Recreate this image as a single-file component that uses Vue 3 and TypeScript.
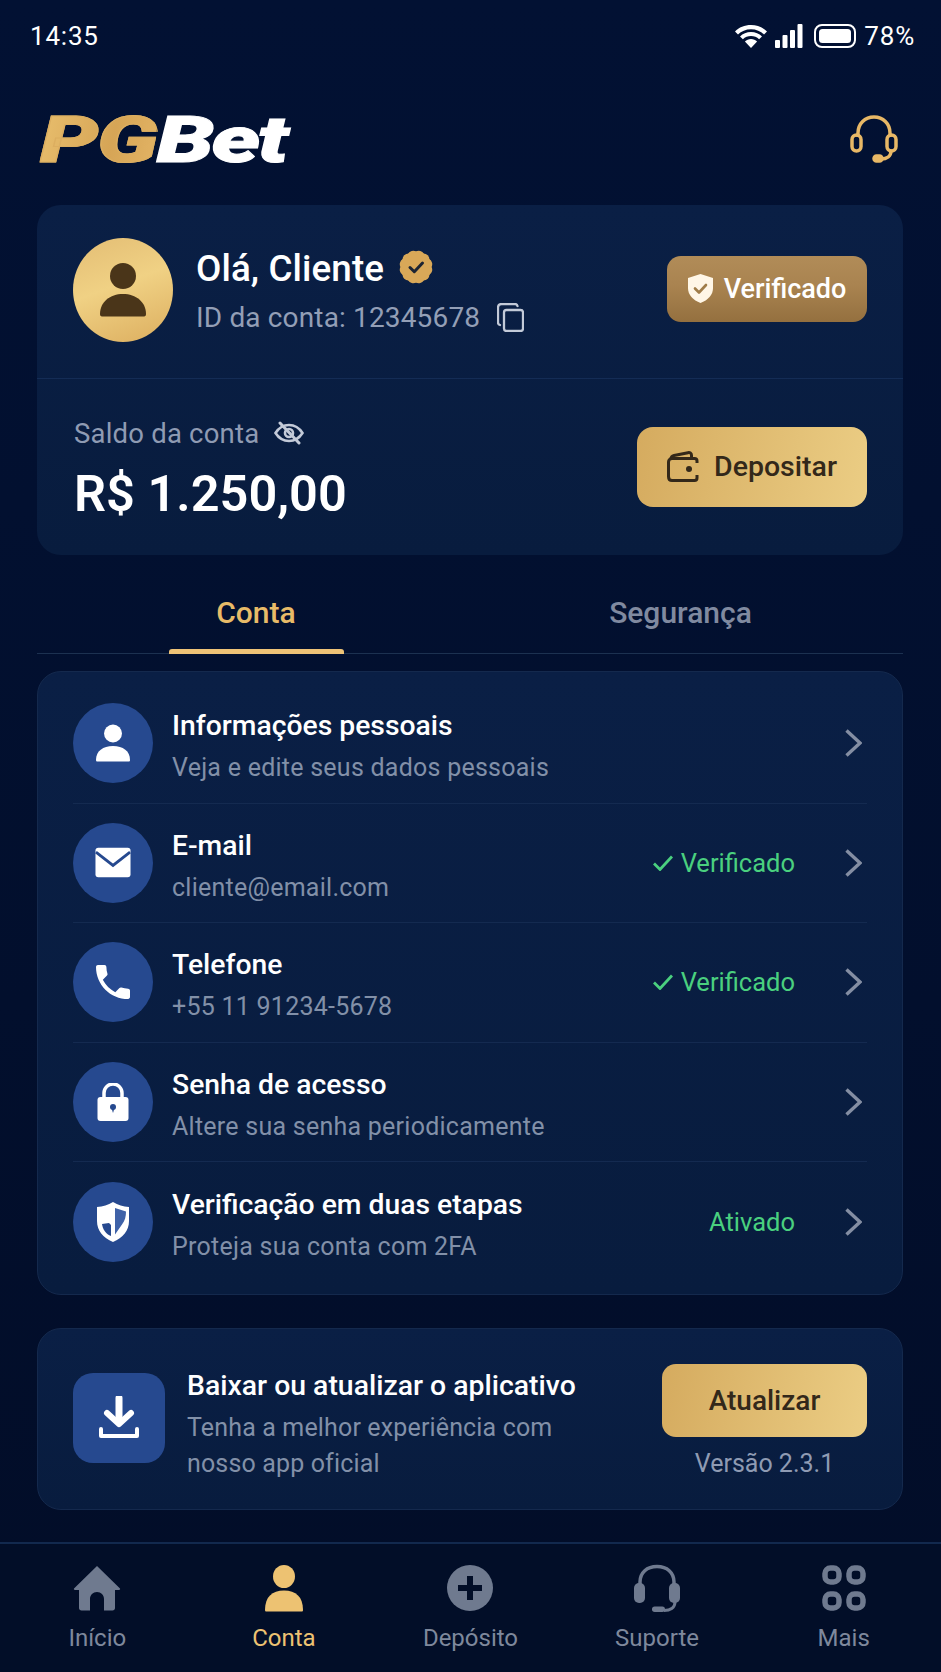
<script setup lang="ts">
interface Row {
  icon: string;
  title: string;
  sub: string;
  status?: string;
  check?: boolean;
}

const rows: Row[] = [
  { icon: 'user', title: 'Informações pessoais', sub: 'Veja e edite seus dados pessoais' },
  { icon: 'mail', title: 'E-mail', sub: 'cliente@email.com', status: 'Verificado', check: true },
  { icon: 'phone', title: 'Telefone', sub: '+55 11 91234-5678', status: 'Verificado', check: true },
  { icon: 'lock', title: 'Senha de acesso', sub: 'Altere sua senha periodicamente' },
  { icon: 'shield', title: 'Verificação em duas etapas', sub: 'Proteja sua conta com 2FA', status: 'Ativado' },
];

const navItems = [
  { icon: 'home', label: 'Início' },
  { icon: 'user', label: 'Conta', active: true },
  { icon: 'plus', label: 'Depósito' },
  { icon: 'headset', label: 'Suporte' },
  { icon: 'grid', label: 'Mais' },
];
</script>

<template>
  <div class="app">
    <div class="status-bar">
      <span>14:35</span>
      <div class="status-right">
        <svg width="34" height="24" viewBox="0 0 34 24" fill="#fff">
          <path d="M17 1C10.6 1 5 3.400 1 7.400l3 3C7.300 7.200 11.900 5.200 17 5.200s9.700 2 13 5.200l3-3C29 3.400 23.400 1 17 1z" />
          <path d="M17 8c-4.300 0-8.200 1.700-11 4.400l2.900 2.900C11 13.300 13.900 12.100 17 12.100s6 1.200 8.100 3.200l2.900-2.900C25.200 9.700 21.300 8 17 8z" />
          <path d="M17 15c-2.400 0-4.500.9-6.100 2.400L17 24l6.100-6.600C21.500 15.900 19.400 15 17 15z" />
        </svg>
        <svg class="signal" width="28" height="24" viewBox="0 0 28 24" fill="#fff">
          <rect x="0" y="16" width="5" height="8" rx="1" />
          <rect x="7.500" y="11" width="5" height="13" rx="1" />
          <rect x="15" y="6" width="5" height="18" rx="1" />
          <rect x="22.500" y="0" width="5" height="24" rx="1" />
        </svg>
        <svg class="battery" width="42" height="24" viewBox="0 0 42 24">
          <rect x="1" y="1" width="40" height="22" rx="7" fill="none" stroke="#fff" stroke-width="2" />
          <rect x="5" y="5" width="32" height="14" rx="3.500" fill="#fff" />
        </svg>
        <span>78%</span>
      </div>
    </div>

    <header class="top">
      <div class="logo"><span class="logo-gold">PG</span><span class="logo-white">Bet</span></div>
      <svg width="48" height="48" viewBox="0 0 48 48" fill="none" stroke="#e8b866" stroke-width="3.500">
        <path d="M8 22v-4C8 8.500 15 2 24 2s16 6.500 16 16v4" />
        <rect x="2" y="20" width="9" height="16" rx="4.500" />
        <rect x="37" y="20" width="9" height="16" rx="4.500" />
        <path d="M41 36c0 5-4 8-10 8" stroke-linecap="round" />
        <rect x="24" y="41" width="8" height="5" rx="2.500" fill="#e8b866" />
      </svg>
    </header>

    <main class="content">
      <section class="card account">
        <div class="account-top">
          <div class="avatar">
            <svg width="48" height="54" viewBox="0 0 48 54" fill="#4a3519">
              <circle cx="24" cy="13" r="13" />
              <path d="M1 51c0-12 10-20 23-20s23 8 23 20c0 1.500-.5 2.500-2 2.500H3c-1.500 0-2-1-2-2.500z" />
            </svg>
          </div>
          <div class="who">
            <div class="name-line">
              <span class="name">Olá, Cliente</span>
              <svg class="seal" width="34" height="34" viewBox="0 0 34 34">
                <g fill="#d9a858">
                  <rect x="3.500" y="3.500" width="27" height="27" rx="6" />
                  <rect x="3.500" y="3.500" width="27" height="27" rx="6" transform="rotate(30 17 17)" />
                  <rect x="3.500" y="3.500" width="27" height="27" rx="6" transform="rotate(60 17 17)" />
                </g>
                <path d="M11 17.500l4.300 4.200L23.500 13" fill="none" stroke="#1c2433" stroke-width="3" stroke-linecap="round" stroke-linejoin="round" />
              </svg>
            </div>
            <div class="id-line">
              <span>ID da conta: 12345678</span>
              <svg width="27" height="29" viewBox="0 0 27 29" fill="none" stroke="#c3cad8" stroke-width="2.300">
                <rect x="7" y="7" width="19" height="21" rx="2.500" />
                <path d="M3 22c-1.200-.3-2-1.200-2-2.500V4.500C1 2.500 2.500 1 4.500 1H18c1.200 0 2.200.7 2.500 2" stroke-linecap="round" />
              </svg>
            </div>
          </div>
          <div class="badge">
            <svg width="25" height="29" viewBox="0 0 25 29">
              <path d="M12.500 0L25 4v10c0 7-5 12-12.500 15C5 26 0 21 0 14V4z" fill="#fff6e6" />
              <path d="M7 14.500l4 4 7-7.500" fill="none" stroke="#a07c48" stroke-width="2.600" stroke-linecap="round" stroke-linejoin="round" />
            </svg>
            <span>Verificado</span>
          </div>
        </div>
        <div class="account-bottom">
          <div class="balance">
            <div class="balance-label">
              <span>Saldo da conta</span>
              <svg width="30" height="24" viewBox="0 0 30 24" fill="none" stroke="#c3cad8" stroke-width="2.600" stroke-linecap="round">
                <path d="M1.500 12C5 6.500 9.500 4 15 4s10 2.500 13.500 8C25 17.500 20.500 20 15 20S5 17.500 1.500 12z" />
                <circle cx="15" cy="12" r="4" />
                <path d="M6 2l19 20" stroke-width="3" />
              </svg>
            </div>
            <div class="amount">R$ 1.250,00</div>
          </div>
          <button class="deposit">
            <svg width="32" height="31" viewBox="0 0 32 31" fill="none" stroke="#33281a" stroke-width="3">
              <path d="M4 8c0-2 1-3 3-3.500L21 1.700c1.800-.4 3.500.5 3.500 2.500V7" stroke-linejoin="round" />
              <path d="M30 12V10c0-1.500-1-2.500-2.500-2.500H5C3 7.500 1.500 9 1.500 11v14.500C1.500 28 3 29.500 5 29.500h22.500c1.500 0 2.500-1 2.500-2.500v-3" />
              <circle cx="22" cy="18" r="3" fill="#33281a" stroke="none" />
            </svg>
            <span>Depositar</span>
          </button>
        </div>
      </section>

      <nav class="tabs">
        <div class="tab tab-active">Conta</div>
        <div class="tab">Segurança</div>
      </nav>

      <section class="card list">
        <div v-for="row in rows" :key="row.title" class="row">
          <div class="row-icon">
            <svg v-if="row.icon === 'user'" width="34" height="38" viewBox="0 0 34 38" fill="#fff">
              <circle cx="17" cy="9.500" r="9" />
              <path d="M0 36c0-9 7-14 17-14s17 5 17 14c0 1-.5 1.500-1.500 1.500h-31C.5 37.500 0 37 0 36z" />
            </svg>
            <svg v-else-if="row.icon === 'mail'" width="36" height="31" viewBox="0 0 38 32">
              <rect x="0.500" y="0.500" width="37" height="31" rx="3" fill="#fff" />
              <path d="M1 5l18 14L37 5" fill="none" stroke="#26498f" stroke-width="3" />
            </svg>
            <svg v-else-if="row.icon === 'phone'" width="34" height="34" viewBox="3 3 18 18" fill="#fff">
              <path d="M6.620 10.790c1.440 2.830 3.760 5.140 6.590 6.590l2.200-2.200c.27-.27.67-.36 1.020-.24 1.120.37 2.330.57 3.570.57.55 0 1 .45 1 1V20c0 .55-.45 1-1 1-9.390 0-17-7.610-17-17 0-.55.45-1 1-1h3.500c.55 0 1 .45 1 1 0 1.250.2 2.450.57 3.570.11.35.03.74-.25 1.020l-2.200 2.200z" />
            </svg>
            <svg v-else-if="row.icon === 'lock'" width="32" height="38" viewBox="0 0 32 38">
              <path d="M7 17V10a9 9 0 0 1 18 0v7" fill="none" stroke="#fff" stroke-width="3.500" />
              <rect x="0.500" y="14" width="31" height="24" rx="3" fill="#fff" />
              <circle cx="16" cy="24" r="3" fill="#26498f" />
              <path d="M14.500 25h3l-1.500 5z" fill="#26498f" />
            </svg>
            <svg v-else width="34" height="40" viewBox="0 0 34 40">
              <path d="M17 0c5 3 10 4.500 16 5v14c0 10-6 16.500-16 21C7 35.500 1 29 1 19V5c6-.5 11-2 16-5z" fill="#fff" />
              <path d="M19 6l11 3.500c0 5-1 9-4 13l-7 10V21z" fill="#3f62a8" />
              <path d="M6 22l7-1 2 2v11c-5-2-8-6-9-12z" fill="#26498f" />
            </svg>
          </div>
          <div class="row-text">
            <div class="row-title">{{ row.title }}</div>
            <div class="row-sub">{{ row.sub }}</div>
          </div>
          <div v-if="row.status" class="row-status">
            <svg v-if="row.check" width="20" height="16" viewBox="0 0 20 16" fill="none" stroke="#4ad07f" stroke-width="2.800">
              <path d="M1 8.500l6 6L19 1.500" />
            </svg>
            <span>{{ row.status }}</span>
          </div>
          <svg class="chevron" width="17" height="28" viewBox="0 0 17 28" fill="none" stroke="#848ea3" stroke-width="3.400">
            <path d="M1.500 1.500L15 14 1.500 26.500" />
          </svg>
        </div>
      </section>

      <section class="card download">
        <div class="download-icon">
          <svg width="40" height="44" viewBox="0 0 40 44" fill="none" stroke="#fff" stroke-linecap="round" stroke-linejoin="round">
            <path d="M20 2v24" stroke-width="7" />
            <path d="M8 17l12 11 12-11" stroke-width="6" />
            <path d="M2 33v7h36v-7" stroke-width="4" />
          </svg>
        </div>
        <div class="download-text">
          <div class="download-title">Baixar ou atualizar o aplicativo</div>
          <div class="download-sub">Tenha a melhor experiência com<br />nosso app oficial</div>
        </div>
        <div class="download-action">
          <button class="update">Atualizar</button>
          <div class="version">Versão 2.3.1</div>
        </div>
      </section>
    </main>

    <footer class="bottom-nav">
      <div v-for="item in navItems" :key="item.label" class="nav-item" :class="{ 'nav-active': item.active }">
        <svg width="48" height="48" viewBox="0 0 48 48" fill="currentColor">
          <path v-if="item.icon === 'home'" fill-rule="evenodd" d="M24 2L47 24.500c.4.500 0 1.500-1 1.500h-4v18c0 1.500-1 2.500-2.500 2.500H31V35c0-4-3-7-7-7s-7 3-7 7v11.500H8.500C7 46.500 6 45.500 6 44V26H2c-1 0-1.400-1-1-1.500z" />
          <g v-else-if="item.icon === 'user'">
            <ellipse cx="24" cy="12.500" rx="11" ry="11.500" />
            <path d="M5 46c0-13 7-19.500 19-19.500S43 33 43 46c0 1-.5 1.500-1.500 1.500h-35C5.500 47.500 5 47 5 46z" />
          </g>
          <g v-else-if="item.icon === 'plus'">
            <circle cx="24" cy="24" r="23" />
            <path d="M21 12h6v9h9v6h-9v9h-6v-9h-9v-6h9z" fill="#020e28" />
          </g>
          <g v-else-if="item.icon === 'headset'">
            <path d="M7 21v-3C7 8.500 14 2.500 24 2.500S41 8.500 41 18v3" fill="none" stroke="currentColor" stroke-width="3.500" />
            <rect x="1" y="19" width="11" height="20" rx="5" />
            <rect x="36" y="19" width="11" height="20" rx="5" />
            <path d="M42 38c0 6-5 8.500-11 8.500" fill="none" stroke="currentColor" stroke-width="3" />
            <rect x="19" y="42.500" width="13" height="5.500" rx="2.700" />
          </g>
          <g v-else fill="none" stroke="currentColor" stroke-width="5.500">
            <rect x="5" y="4" width="14" height="14" rx="5.500" />
            <rect x="29" y="4" width="14" height="14" rx="5.500" />
            <rect x="5" y="30" width="14" height="14" rx="5.500" />
            <rect x="29" y="30" width="14" height="14" rx="5.500" />
          </g>
        </svg>
        <span>{{ item.label }}</span>
      </div>
    </footer>
  </div>
</template>

<style scoped>
.app,
.app * {
  box-sizing: border-box;
}

.app {
  width: 941px;
  height: 1672px;
  display: flex;
  flex-direction: column;
  overflow: hidden;
  background: linear-gradient(180deg, #021133 0%, #020f2d 60%, #020d28 100%);
  font-family: Roboto, "Liberation Sans", sans-serif;
  color: #fff;
}

.status-bar {
  height: 72px;
  flex-shrink: 0;
  display: flex;
  align-items: center;
  justify-content: space-between;
  padding: 0 26px 0 30px;
  font-size: 26px;
  letter-spacing: 0.8px;
}

.status-right {
  display: flex;
  align-items: center;
}

.signal {
  margin-left: 7px;
}

.battery {
  margin: 0 8px 0 11px;
}

.top {
  height: 133px;
  flex-shrink: 0;
  display: flex;
  align-items: flex-start;
  justify-content: space-between;
  padding: 43px 43px 0 40px;
}

.logo {
  font-size: 65px;
  line-height: 46px;
  height: 46px;
  margin-top: 2px;
  font-weight: 900;
  font-style: italic;
  letter-spacing: -1px;
  transform: scaleX(1.42);
  transform-origin: left center;
}

.logo-gold {
  background: linear-gradient(100deg, #e9bf6e 0%, #d6a556 60%, #e3b465 100%);
  -webkit-background-clip: text;
  background-clip: text;
  color: transparent;
  -webkit-text-stroke: 1px #dcae60;
}

.logo-white {
  color: #fff;
  letter-spacing: -2px;
  -webkit-text-stroke: 1px #fff;
}

.content {
  padding: 0 38px 0 37px;
}

.card {
  background: linear-gradient(180deg, #0a1f45 0%, #081c3e 100%);
  border-radius: 24px;
}

.account {
  height: 350px;
}

.account-top {
  height: 174px;
  display: flex;
  align-items: center;
  padding: 0 36px;
  border-bottom: 1px solid #142c55;
}

.avatar {
  width: 100px;
  height: 104px;
  border-radius: 50%;
  background: linear-gradient(160deg, #e3bd74 0%, #f0d184 45%, #dcae5f 100%);
  display: flex;
  align-items: center;
  justify-content: center;
  flex-shrink: 0;
  margin-top: -4px;
}

.who {
  flex: 1;
  margin-left: 23px;
  margin-top: -4px;
}

.name-line {
  display: flex;
  align-items: center;
  height: 46px;
}

.name {
  font-size: 36.800px;
  font-weight: 500;
  letter-spacing: 0.1px;
}

.seal {
  margin-left: 15px;
  margin-top: -2px;
}

.id-line {
  display: flex;
  align-items: center;
  margin-top: 10px;
  font-size: 28px;
  color: #939fb6;
  letter-spacing: 0.15px;
}

.id-line svg {
  margin-left: 17px;
}

.badge {
  width: 200px;
  height: 66px;
  border-radius: 14px;
  display: flex;
  align-items: center;
  justify-content: center;
  gap: 11px;
  background: linear-gradient(180deg, #b18c58 0%, #a98350 45%, #94703f 100%);
  font-size: 27px;
  font-weight: 500;
  margin-top: -6px;
}

.account-bottom {
  height: 176px;
  display: flex;
  align-items: center;
  justify-content: space-between;
  padding: 0 36px 0 37px;
}

.balance {
  padding-top: 6px;
}

.balance-label {
  display: flex;
  align-items: center;
  gap: 15px;
  font-size: 27.500px;
  color: #8f9bb3;
  letter-spacing: 0.2px;
}

.amount {
  font-size: 50.500px;
  font-weight: 600;
  line-height: 60px;
  margin-top: 14px;
}

.deposit {
  width: 230px;
  height: 80px;
  border: none;
  border-radius: 16px;
  display: flex;
  align-items: center;
  justify-content: center;
  gap: 15px;
  background: linear-gradient(100deg, #d5ab5f 0%, #ebcd84 100%);
  font-family: inherit;
  font-size: 28.500px;
  font-weight: 500;
  color: #33281a;
  padding: 0;
  margin-top: -1px;
}

.tabs {
  height: 99px;
  display: flex;
  border-bottom: 1px solid #1c3150;
}

.tab {
  text-align: center;
  padding-top: 40px;
  font-size: 30px;
  font-weight: 500;
  color: #808aa0;
  position: relative;
}

.tab-active {
  color: #e8bb68;
  width: 438px;
}

.tab-active::after {
  content: "";
  position: absolute;
  left: 132px;
  width: 175px;
  bottom: -1px;
  height: 5px;
  border-radius: 3px 3px 0 0;
  background: #eec377;
}

.tab + .tab {
  flex: 1;
  padding-right: 17px;
}

.list {
  margin-top: 17px;
  height: 624px;
  padding: 12px 35px 0;
  border: 1px solid #14294d;
}

.row {
  height: 119.500px;
  display: flex;
  align-items: center;
  border-bottom: 1px solid #142a50;
}

.row:last-child {
  border-bottom: none;
}

.row-icon {
  width: 80px;
  height: 80px;
  border-radius: 50%;
  background: #26498f;
  display: flex;
  align-items: center;
  justify-content: center;
  flex-shrink: 0;
}

.row-text {
  flex: 1;
  margin-left: 19px;
  padding-top: 8px;
}

.row-title {
  font-size: 28.300px;
  font-weight: 500;
  line-height: 36px;
}

.row-sub {
  font-size: 25px;
  color: #8290a8;
  line-height: 36px;
  margin-top: 6px;
  letter-spacing: 0.25px;
}

.row-status {
  display: flex;
  align-items: center;
  gap: 8px;
  font-size: 25.500px;
  color: #4ad07f;
  margin-right: 50px;
}

.chevron {
  margin-right: 5px;
}

.download {
  margin-top: 33px;
  height: 182px;
  display: flex;
  align-items: center;
  padding: 0 35px;
  border: 1px solid #14294d;
}

.download-icon {
  width: 92px;
  height: 90px;
  border-radius: 20px;
  background: #26498f;
  display: flex;
  align-items: center;
  justify-content: center;
  flex-shrink: 0;
  margin-top: -3px;
}

.download-text {
  flex: 1;
  margin-left: 22px;
  padding-top: 11px;
}

.download-title {
  font-size: 28.400px;
  font-weight: 500;
  line-height: 36px;
}

.download-sub {
  font-size: 25px;
  color: #8290a8;
  line-height: 36px;
  margin-top: 6px;
  letter-spacing: 0.15px;
}

.download-action {
  width: 205px;
  display: flex;
  flex-direction: column;
  align-items: center;
  padding-top: 6px;
}

.update {
  width: 205px;
  height: 73px;
  border: none;
  border-radius: 14px;
  background: linear-gradient(100deg, #d5ab5f 0%, #ebcd84 100%);
  font-family: inherit;
  font-size: 28px;
  font-weight: 500;
  color: #33281a;
  padding: 0;
}

.version {
  font-size: 25px;
  color: #8f9bb3;
  line-height: 34px;
  margin-top: 10px;
}

.bottom-nav {
  margin-top: auto;
  height: 130px;
  flex-shrink: 0;
  display: flex;
  padding: 20px 4px 0;
  background: #020e28;
  border-top: 2px solid #12294e;
}

.nav-item {
  flex: 1;
  display: flex;
  flex-direction: column;
  align-items: center;
  color: #6f7a8f;
  font-size: 24px;
}

.nav-item span {
  margin-top: 12px;
  color: #7e889c;
}

.nav-active,
.nav-active span {
  color: #edc272;
}
</style>

<style>
html,
body {
  background: #020e28;
}
</style>
